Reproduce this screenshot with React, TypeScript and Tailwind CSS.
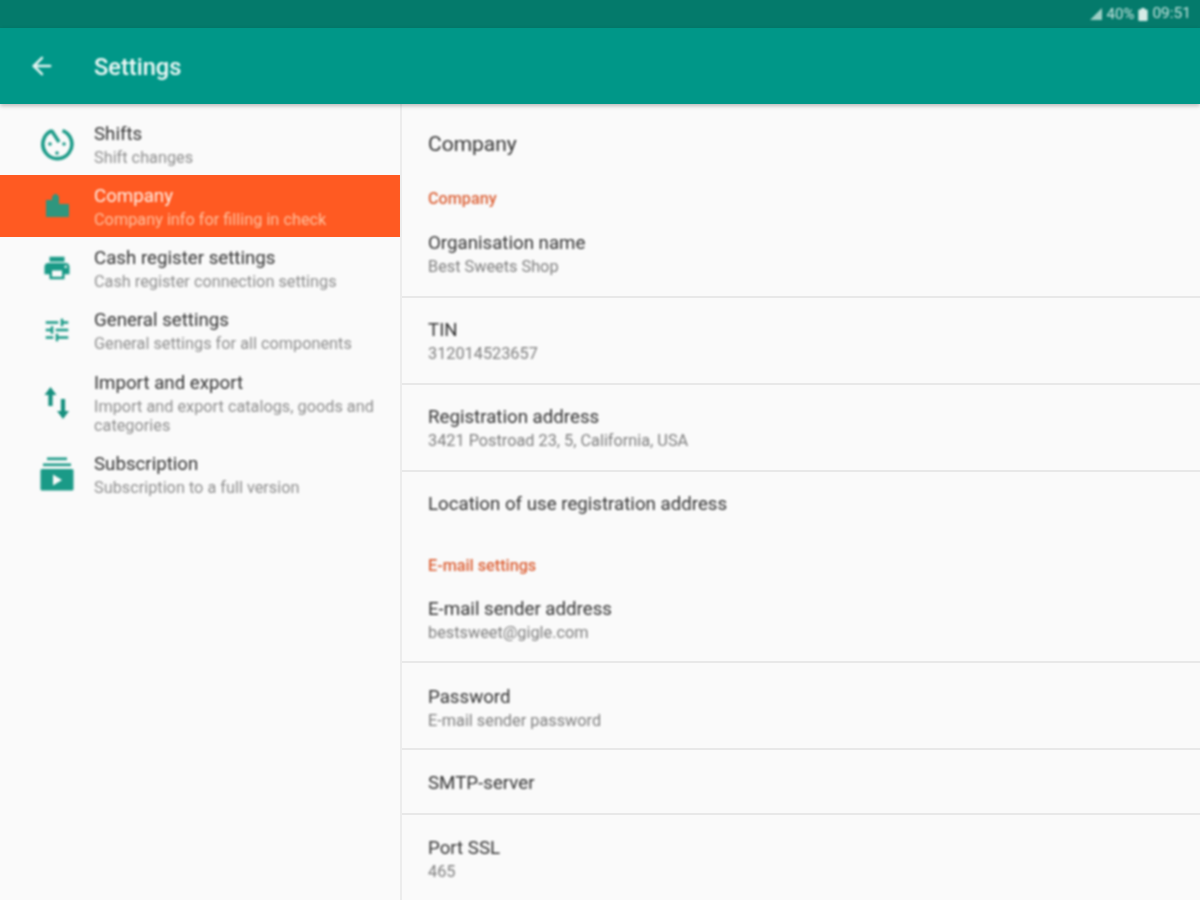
import { ArrowLeft } from 'lucide-react';

const teal = '#1a9a87';

function ShiftsIcon() {
  return (
    <svg viewBox="0 0 34 34" className="w-[34px] h-[34px]" fill="none">
      <path d="M12 3.700A14.500 14.500 0 1 0 22.500 3.600" stroke={teal} strokeWidth="3.600" />
      <path d="M11.500 3.500L19 15" stroke={teal} strokeWidth="3.400" />
      <circle cx="10" cy="17" r="1.800" fill={teal} />
      <circle cx="24" cy="17" r="1.800" fill={teal} />
      <circle cx="17" cy="26" r="1.800" fill={teal} />
    </svg>
  );
}

function CompanyIcon() {
  return (
    <svg viewBox="0 0 25 24" className="w-[25px] h-[24px]" fill="#2f967e">
      <path d="M1 23V6h6V2.500L9.500 0h2L14 2.500V10h10v13z" />
    </svg>
  );
}

function PrinterIcon() {
  return (
    <svg viewBox="0 0 24 24" className="w-[30px] h-[30px]" fill={teal}>
      <path d="M19 8H5c-1.66 0-3 1.34-3 3v6h4v4h12v-4h4v-6c0-1.66-1.34-3-3-3zm-3 11H8v-5h8v5zm3-7c-.55 0-1-.45-1-1s.45-1 1-1 1 .45 1 1-.45 1-1 1zm-1-9H6v4h12V3z" />
    </svg>
  );
}

function TuneIcon() {
  return (
    <svg viewBox="0 0 24 24" className="w-[30px] h-[30px]" fill={teal}>
      <path d="M3 17v2h6v-2H3zM3 5v2h10V5H3zm10 16v-2h8v-2h-8v-2h-2v6h2zM7 9v2H3v2h4v2h2V9H7zm14 4v-2H11v2h10zm-6-4h2V7h4V5h-4V3h-2v6z" />
    </svg>
  );
}

function SwapIcon() {
  return (
    <svg viewBox="0 0 26 33" className="w-[26px] h-[33px]" fill="#17907e">
      <path d="M0.500 9L6.500 1l6 8H8.600v11H4.400V9z" />
      <path d="M13 25l6 8 6-8h-3.900V13h-4.200v12z" />
    </svg>
  );
}

function SubscriptionIcon() {
  return (
    <svg viewBox="0 0 34 34" className="w-[34px] h-[34px]" fill={teal}>
      <rect x="7" y="0.500" width="20" height="2.600" />
      <rect x="3" y="6.500" width="28" height="2.600" />
      <path d="M2 12h30a1.500 1.500 0 0 1 1.500 1.500V32a1.500 1.500 0 0 1-1.500 1.500H2A1.500 1.500 0 0 1 .5 32V13.500A1.500 1.500 0 0 1 2 12z" />
      <path d="M13 17.500v11l9-5.500z" fill="#fafafa" />
    </svg>
  );
}

function NavRow({ icon, title, sub, active, className }: { icon: React.ReactNode; title: string; sub: string; active?: boolean; className?: string }) {
  return (
    <div className={`flex items-center pl-[94px] relative ${active ? 'bg-[#ff5a22]' : ''} ${className ?? ''}`}>
      <div className="absolute left-[28px] w-[58px] flex justify-center blur-[0.8px]">{icon}</div>
      <div className="blur-[0.8px]">
        <div className={`text-[18.700px] leading-[24px] pt-[1px] ${active ? 'text-[#fff0e6]' : 'text-[#333333]'}`}>{title}</div>
        <div className={`text-[16.300px] leading-[19px] mt-[2px] ${active ? 'text-[#fdc09e]' : 'text-[#8e8e8e]'}`}>{sub}</div>
      </div>
    </div>
  );
}

function Field({ title, value, border = true, className }: { title: string; value?: string; border?: boolean; className?: string }) {
  return (
    <div className={`pl-[26px] flex flex-col justify-center ${border ? 'border-b-2 border-[#e8e8e8]' : ''} ${className ?? ''}`}>
      <div className="text-[18.700px] leading-[24px] text-[#333333] blur-[0.8px]">{title}</div>
      {value && <div className="text-[16.300px] leading-[20px] mt-[2px] text-[#7e7e7e] blur-[0.8px]">{value}</div>}
    </div>
  );
}

function SectionLabel({ children, className }: { children: React.ReactNode; className?: string }) {
  return <div className={`pl-[26px] text-[16.200px] leading-[20px] font-medium text-[#dc6238] blur-[0.8px] ${className ?? ''}`}>{children}</div>;
}

export default function App() {
  return (
    <div className="w-[1200px] h-[900px] overflow-hidden bg-[#fafafa] flex flex-col font-['Roboto',sans-serif]">
      <div className="h-[28px] shrink-0 bg-[#047a6b] flex items-center justify-end pr-[9px] gap-[4px] text-[15.500px] text-[#c4e4de]">
        <div className="flex items-center gap-[4px] blur-[0.8px]">
          <svg viewBox="0 0 14 14" className="w-[14px] h-[14px]" fill="#9fcfc6">
            <path d="M1 13L13 1v12z" />
          </svg>
          <span className="text-[15px]">40%</span>
          <svg viewBox="0 0 10 14" className="w-[10px] h-[13px]" fill="#d5ebe7">
            <path d="M3 0h4v1.500h2a1 1 0 0 1 1 1V13a1 1 0 0 1-1 1H1a1 1 0 0 1-1-1V2.500a1 1 0 0 1 1-1h2z" />
          </svg>
          <span>09:51</span>
        </div>
      </div>
      <div className="h-[76px] shrink-0 bg-[#009788] flex items-center pl-[28px] shadow-[0_2px_4px_rgba(0,0,0,0.25)] relative">
        <ArrowLeft className="w-[28px] h-[28px] text-[#e2f4f1] blur-[0.8px]" strokeWidth={2.200} />
        <span className="ml-[38px] pt-[4px] text-[23.600px] font-medium text-[#f0faf8] blur-[0.8px]">Settings</span>
      </div>
      <div className="flex flex-1 min-h-0">
        <div className="w-[400px] shrink-0 pt-[9px]">
          <NavRow icon={<ShiftsIcon />} title="Shifts" sub="Shift changes" className="h-[62px]" />
          <NavRow icon={<CompanyIcon />} title="Company" sub="Company info for filling in check" active className="h-[62px]" />
          <NavRow icon={<PrinterIcon />} title="Cash register settings" sub="Cash register connection settings" className="h-[62px]" />
          <NavRow icon={<TuneIcon />} title="General settings" sub="General settings for all components" className="h-[62px]" />
          <NavRow icon={<SwapIcon />} title="Import and export" sub="Import and export catalogs, goods and categories" className="h-[82px] pr-[20px]" />
          <NavRow icon={<SubscriptionIcon />} title="Subscription" sub="Subscription to a full version" className="h-[62px]" />
        </div>
        <div className="flex-1 border-l-2 border-[#ececec]">
          <div className="pl-[26px] pt-[26px] text-[21px] leading-[28px] text-[#333333] blur-[0.8px]">Company</div>
          <SectionLabel className="mt-[31px] mb-[2px]">Company</SectionLabel>
          <Field title="Organisation name" value="Best Sweets Shop" className="h-[87px]" />
          <Field title="TIN" value="312014523657" className="h-[87px]" />
          <Field title="Registration address" value="3421 Postroad 23, 5, California, USA" className="h-[87px]" />
          <Field title="Location of use registration address" border={false} className="h-[64px]" />
          <SectionLabel className="mt-[20px]">E-mail settings</SectionLabel>
          <Field title="E-mail sender address" value="bestsweet@gigle.com" className="h-[87px] pt-[2px]" />
          <Field title="Password" value="E-mail sender password" className="h-[87px] pt-[4px]" />
          <Field title="SMTP-server" className="h-[65px] pt-[2px]" />
          <Field title="Port SSL" value="465" border={false} className="h-[87px]" />
        </div>
      </div>
    </div>
  );
}
